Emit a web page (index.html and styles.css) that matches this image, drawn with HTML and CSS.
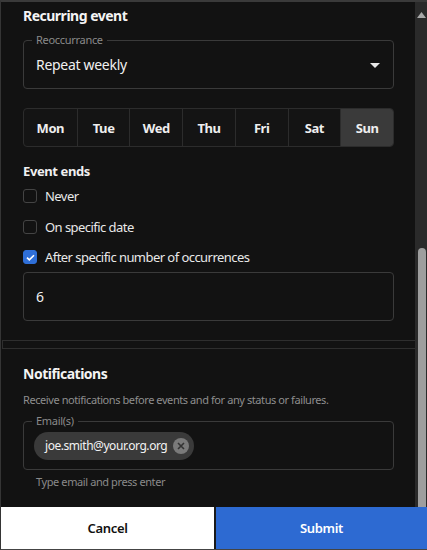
FILE: index.html
```html
<!DOCTYPE html>
<html>
<head>
<meta charset="utf-8">
<link rel="stylesheet" href="styles.css">
</head>
<body>
<div class="app">
  <div class="viewport">
    <div class="content">
      <section class="section recurring">
        <h2 class="title">Recurring event</h2>
        <div class="field select">
          <span class="legend">Reoccurrance</span>
          <span class="value">Repeat weekly</span>
          <svg class="caret" width="10" height="5" viewBox="0 0 10 5"><path d="M0 0h10L5 5z" fill="#e8e8e8"/></svg>
        </div>
        <div class="days">
          <div class="day">Mon</div>
          <div class="day">Tue</div>
          <div class="day">Wed</div>
          <div class="day">Thu</div>
          <div class="day">Fri</div>
          <div class="day">Sat</div>
          <div class="day active">Sun</div>
        </div>
        <h3 class="subtitle">Event ends</h3>
        <div class="options">
          <label class="option"><span class="box"></span>Never</label>
          <label class="option"><span class="box"></span>On specific date</label>
          <label class="option"><span class="box checked"><svg width="11" height="11" viewBox="0 0 11 11"><path d="M2 5.6l2.3 2.3L9 3.2" fill="none" stroke="#fff" stroke-width="1.6"/></svg></span>After specific number of occurrences</label>
        </div>
        <div class="field number"><span class="value">6</span></div>
      </section>
      <div class="divider"></div>
      <section class="section notifications">
        <h2 class="title">Notifications</h2>
        <p class="desc">Receive notifications before events and for any status or failures.</p>
        <div class="field emails">
          <span class="legend">Email(s)</span>
          <span class="chip">joe.smith@your.org.org<span class="chip-x"><svg width="16" height="16" viewBox="0 0 16 16"><circle cx="8" cy="8" r="8" fill="#7a7a7a"/><path d="M5 5l6 6M11 5l-6 6" stroke="#333" stroke-width="1.6"/></svg></span></span>
        </div>
        <p class="helper">Type email and press enter</p>
      </section>
    </div>
    <div class="scrollbar">
      <svg class="arrow" width="9" height="6" viewBox="0 0 9 6"><path d="M0 6L4.5 0 9 6z" fill="#a8a8a8"/></svg>
      <div class="thumb"></div>
    </div>
  </div>
  <div class="actions">
    <button class="btn cancel">Cancel</button>
    <button class="btn submit">Submit</button>
  </div>
</div>
</body>
</html>
```
FILE: styles.css
```css
* { box-sizing: border-box; }
html, body { margin: 0; padding: 0; background: #111111; }
body { font-family: "Noto Sans", "Open Sans", sans-serif; color: #e8e8e8; }
.app {
  width: 427px; height: 550px;
  display: flex; flex-direction: column;
  border-top: 2px solid #3a3a3a;
  border-left: 1px solid #353535;
  border-bottom: 1px solid #444;
  background: #121212;
  overflow: hidden;
}
.viewport { flex: 1; display: flex; min-height: 0; }
.content { flex: 1; display: flex; flex-direction: column; min-width: 0; }
.section { padding: 0 21px 0 22px; }
.recurring { padding-bottom: 19px; }
.title { margin: 0; font-size: 14px; font-weight: 700; color: #f4f4f4; line-height: 20px; letter-spacing: -0.5px; }
.recurring .title { margin-top: 4px; }
.field {
  position: relative;
  border: 1px solid #3a3a3a; border-radius: 4px;
  height: 49px; display: flex; align-items: center;
  padding: 0 12px;
}
.select { margin-top: 14px; }
.legend {
  position: absolute; top: -8px; left: 8px;
  padding: 0 4px; background: #121212;
  font-size: 11px; line-height: 14px; color: #8a8a8a; letter-spacing: -0.3px;
}
.value { font-size: 14px; color: #f0f0f0; letter-spacing: -0.3px; }
.caret { position: absolute; right: 13px; top: 22px; }
.days {
  margin-top: 19px;
  display: grid; grid-template-columns: repeat(7, 1fr);
  border: 1px solid #2c2c2c; border-radius: 4px; overflow: hidden;
  height: 39px; background: #141414;
}
.day {
  display: flex; align-items: center; justify-content: center;
  font-size: 13px; font-weight: 700; color: #eeeeee; letter-spacing: -0.4px;
  border-left: 1px solid #2c2c2c;
}
.day:first-child { border-left: none; }
.day.active { background: #3a3a3a; }
.subtitle { margin: 15px 0 0; font-size: 13px; font-weight: 700; color: #f0f0f0; line-height: 18px; letter-spacing: -0.4px; }
.options { display: flex; flex-direction: column; gap: 12.5px; margin-top: 7px; }
.option { display: flex; align-items: center; gap: 8px; font-size: 13px; color: #e8e8e8; line-height: 18px; letter-spacing: -0.55px; }
.box {
  width: 14px; height: 14px; border: 1px solid #444; border-radius: 3px;
  display: flex; align-items: center; justify-content: center;
}
.box.checked { background: #2f6fd8; border-color: #2f6fd8; }
.number { margin-top: 6px; }
.divider {
  height: 9px; margin-left: 1px;
  border: 1px solid #2e2e2e; border-right: none;
  background: #121212;
}
.notifications { padding-top: 15px; }
.desc { margin: 8px 0 0; font-size: 11px; color: #8e8e8e; line-height: 16px; letter-spacing: -0.42px; }
.emails { margin-top: 13px; padding: 0 10px; }
.chip {
  display: inline-flex; align-items: center; gap: 6px;
  height: 28px; border-radius: 14px; background: #3a3a3a;
  padding: 0 5px 0 11px;
  font-size: 12px; color: #f2f2f2; letter-spacing: -0.45px;
}
.chip-x { display: flex; }
.helper { margin: 4px 0 0 13px; font-size: 11px; color: #8a8a8a; line-height: 16px; letter-spacing: -0.4px; }
.scrollbar {
  width: 12px; background: #2a2a2a; position: relative;
  display: flex; flex-direction: column; align-items: center;
}
.arrow { margin-top: 10px; }
.thumb {
  position: absolute; left: 3px; top: 246px; bottom: 0;
  width: 8px; background: #9e9e9e; border-radius: 4px 4px 0 0;
}
.actions { height: 42px; display: flex; gap: 2px; background: #1a1a1a; }
.btn {
  flex: 1; border: none; margin: 0;
  font-family: inherit; font-size: 13px; font-weight: 600; letter-spacing: -0.3px;
}
.cancel { background: #ffffff; color: #111; flex: 0 0 213px; }
.submit { background: #2d6ad2; color: #fff; }
```
